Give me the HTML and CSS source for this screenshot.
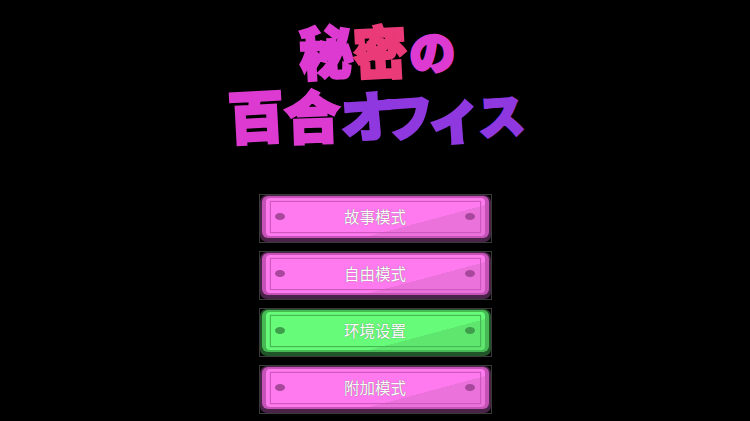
FILE: index.html
```html
<!DOCTYPE html>
<html lang="zh">
<head>
    <meta charset="UTF-8" />
    <title>秘密の百合オフィス</title>
    <link rel="stylesheet" href="styles.css">
</head>
<body>
    <!-- タイトル -->
    <div class="logo">
        <div class="logo-line first">
            <span class="ch pink c-hi">秘</span>
            <span class="ch red c-mitsu">密</span>
            <span class="ch pink c-no">の</span>
        </div>
        <div class="logo-line second">
            <span class="ch pink c-yuri">百</span>
            <span class="ch pink c-go">合</span>
            <span class="ch purple c-o">オ</span>
            <span class="ch purple c-fu">フ</span>
            <span class="ch purple c-i">ィ</span>
            <span class="ch purple c-su">ス</span>
        </div>
    </div>

    <!-- メニュー -->
    <div class="menu">
        <div class="btn"><div class="btn-face"><div class="btn-mid"><div class="btn-plate"><div class="btn-inner"><i class="rivet"></i><span>故事模式</span><i class="rivet"></i></div></div></div></div></div>
        <div class="btn"><div class="btn-face"><div class="btn-mid"><div class="btn-plate"><div class="btn-inner"><i class="rivet"></i><span>自由模式</span><i class="rivet"></i></div></div></div></div></div>
        <div class="btn green"><div class="btn-face"><div class="btn-mid"><div class="btn-plate"><div class="btn-inner"><i class="rivet"></i><span>环境设置</span><i class="rivet"></i></div></div></div></div></div>
        <div class="btn"><div class="btn-face"><div class="btn-mid"><div class="btn-plate"><div class="btn-inner"><i class="rivet"></i><span>附加模式</span><i class="rivet"></i></div></div></div></div></div>
    </div>
</body>
</html>
```

FILE: styles.css
```css
html, body {
    margin: 0;
    height: 421px;
    overflow: hidden;
    background: #000;
}
body {
    display: flex;
    flex-direction: column;
    align-items: center;
    font-family: "Noto Sans CJK JP", "Noto Sans CJK SC", sans-serif;
}

/* title */
.logo {
    height: 194px;
    width: 750px;
    box-sizing: border-box;
    padding-top: 17px;
}
.logo-line {
    display: flex;
    justify-content: center;
    font-weight: 900;
    line-height: 66px;
    height: 64px;
}
.ch {
    display: flex;
    justify-content: center;
    font-size: 54px;
    -webkit-text-stroke: 2.5px currentColor;
    text-shadow: 0 0 1px #999;
}
.pink { color: #dc3ad0; }
.red { color: #ea3a78; }
.purple { color: #9038e0; }

.first { padding-left: 6px; }
.c-hi { width: 54px; transform: rotate(-3deg) scaleY(1.06); }
.c-mitsu { width: 54px; transform: rotate(-3deg) scaleY(1.06); }
.c-no { width: 50px; font-size: 46px; transform: rotate(-4deg); }
.second { padding-right: 6px; }
.c-yuri { width: 56px; font-size: 56px; transform: rotate(-3deg) scaleY(1.02); }
.c-go { width: 56px; font-size: 56px; transform: rotate(-2deg) scaleY(1.02); }
.c-o { width: 54px; font-size: 54px; transform: rotate(-4deg); }
.c-fu { width: 28px; font-size: 50px; transform: rotate(-4deg); }
.c-i { width: 64px; font-size: 56px; transform: rotate(-4deg); }
.c-su { width: 30px; font-size: 47px; transform: rotate(-4deg); }

/* menu */
.menu {
    display: flex;
    flex-direction: column;
    gap: 8px;
}
.btn {
    --light: #ff7aee;
    --mid: #c552b6;
    --sheen: #ea72da;
    --dark: #4a2348;
    --line: #cf58c0;
    --rivet: #a8489c;
    width: 233px;
    height: 49px;
    box-sizing: border-box;
    border: 1px solid #3a3a3a;
}
.btn.green {
    --light: #66fb78;
    --mid: #46b954;
    --sheen: #5fe66f;
    --dark: #1f5527;
    --line: #46b954;
    --rivet: #3f9e4b;
}
.btn-face {
    height: 100%;
    box-sizing: border-box;
    padding: 1px 2px 4px;
    border-radius: 7px;
    background: var(--dark);
}
.btn-mid {
    height: 100%;
    box-sizing: border-box;
    padding: 2px 4px;
    border-radius: 6px;
    background: var(--mid);
}
.btn-plate {
    height: 100%;
    box-sizing: border-box;
    padding: 3px 4px;
    border-radius: 4px;
    background: linear-gradient(165deg, var(--light) 68%, var(--sheen) 68%);
}
.btn-inner {
    height: 100%;
    box-sizing: border-box;
    border: 1px solid var(--line);
    box-shadow: 0 0 1px var(--line);
    display: flex;
    align-items: center;
    justify-content: space-between;
    padding: 0 4px;
}
.btn-inner span {
    font-family: "Noto Sans CJK SC", sans-serif;
    font-size: 15.5px;
    font-weight: 400;
    line-height: 1;
    color: #fff;
    text-shadow: 0 0 1px #666;
    margin-top: -1px;
}
.rivet {
    display: block;
    width: 10px;
    height: 7px;
    margin-top: -2px;
    border-radius: 50%;
    background: var(--rivet);
}
```
